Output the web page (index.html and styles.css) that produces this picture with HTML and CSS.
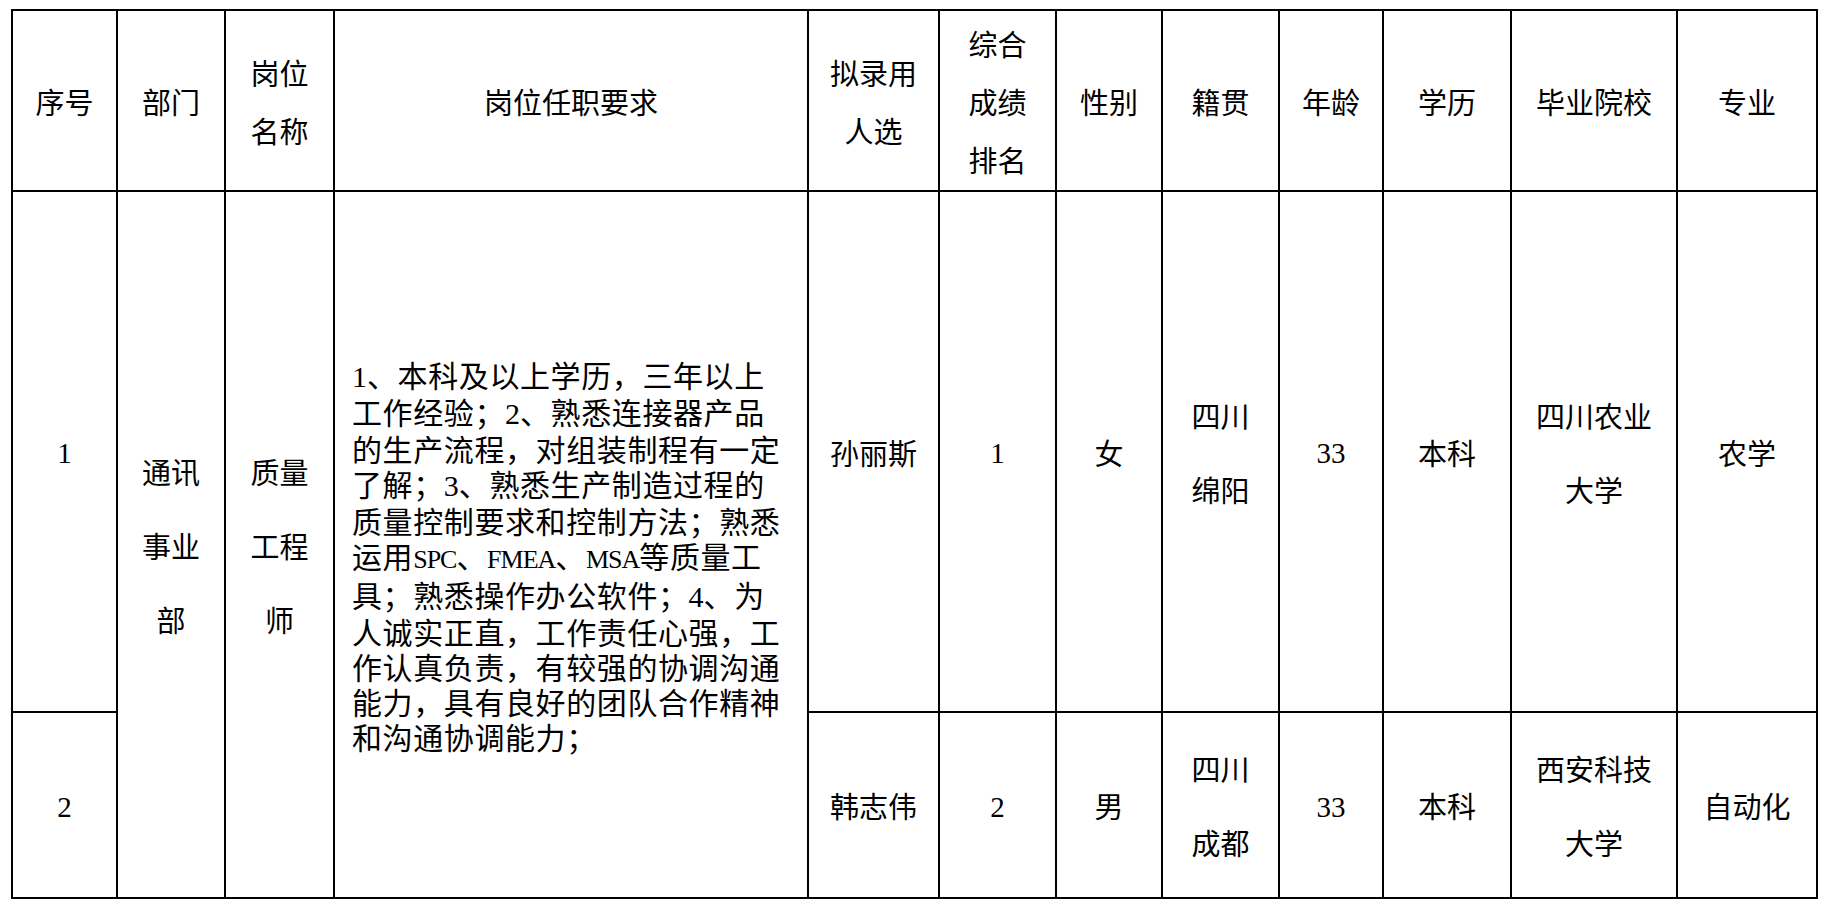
FILE: index.html
```html
<!DOCTYPE html>
<html lang="zh-CN">
<head>
<meta charset="utf-8">
<title>拟录用人选</title>
<link rel="stylesheet" href="styles.css">
</head>
<body>
<table class="grid">
  <colgroup>
    <col class="c1"><col class="c2"><col class="c3"><col class="c4"><col class="c5"><col class="c6">
    <col class="c7"><col class="c8"><col class="c9"><col class="c10"><col class="c11"><col class="c12">
  </colgroup>
  <thead>
    <tr class="head">
      <th>序号</th>
      <th>部门</th>
      <th>岗位<br>名称</th>
      <th>岗位任职要求</th>
      <th>拟录用<br>人选</th>
      <th>综合<br>成绩<br>排名</th>
      <th>性别</th>
      <th>籍贯</th>
      <th>年龄</th>
      <th>学历</th>
      <th>毕业院校</th>
      <th>专业</th>
    </tr>
  </thead>
  <tbody>
    <tr class="r1">
      <td><span class="lat">1</span></td>
      <td rowspan="2">通讯<br>事业<br>部</td>
      <td rowspan="2">质量<br>工程<br>师</td>
      <td rowspan="2" class="req">
        <div class="req-text"><span class="lat">1</span>、本科及以上学历，三年以上<br>工作经验；<span class="lat">2</span>、熟悉连接器产品<br>的生产流程，对组装制程有一定<br>了解；<span class="lat">3</span>、熟悉生产制造过程的<br>质量控制要求和控制方法；熟悉<br>运用<span class="lat abbr">SPC</span>、<span class="lat abbr">FMEA</span>、<span class="lat abbr">MSA</span>等质量工<br>具；熟悉操作办公软件；<span class="lat">4</span>、为<br>人诚实正直，工作责任心强，工<br>作认真负责，有较强的协调沟通<br>能力，具有良好的团队合作精神<br>和沟通协调能力；</div>
      </td>
      <td>孙丽斯</td>
      <td><span class="lat">1</span></td>
      <td>女</td>
      <td>四川<br>绵阳</td>
      <td><span class="lat">33</span></td>
      <td>本科</td>
      <td>四川农业<br>大学</td>
      <td>农学</td>
    </tr>
    <tr class="r2">
      <td><span class="lat">2</span></td>
      <td>韩志伟</td>
      <td><span class="lat">2</span></td>
      <td>男</td>
      <td>四川<br>成都</td>
      <td><span class="lat">33</span></td>
      <td>本科</td>
      <td>西安科技<br>大学</td>
      <td>自动化</td>
    </tr>
  </tbody>
</table>
</body>
</html>
```

FILE: styles.css
```css
html, body {
  background: #ffffff;
}
body {
  margin: 0;
  padding: 9px 0 0 11px;
  font-family: "Noto Sans CJK SC", "Noto Sans", sans-serif;
  color: #000000;
}
.grid {
  border-collapse: collapse;
  table-layout: fixed;
  width: 1807px;
}
.c1 { width: 105px; }
.c2 { width: 108px; }
.c3 { width: 109px; }
.c4 { width: 474px; }
.c5 { width: 131px; }
.c6 { width: 117px; }
.c7 { width: 106px; }
.c8 { width: 117px; }
.c9 { width: 104px; }
.c10 { width: 128px; }
.c11 { width: 166px; }
.c12 { width: 140px; }
.grid th,
.grid td {
  border: 2px solid #000000;
  padding: 0;
  text-align: center;
  vertical-align: middle;
  font-size: 29px;
  font-weight: normal;
  white-space: nowrap;
}
.head { height: 181px; }
.head th { line-height: 58px; }
.r1 { height: 521px; }
.r2 { height: 186px; }
.grid td { line-height: 74px; }
.grid td.req {
  text-align: left;
  padding: 22px 0 0 17px;
}
.req-text {
  line-height: 35px;
  font-size: 30px;
  letter-spacing: 0.6px;
}
.lat {
  font-family: "Liberation Serif", serif;
  letter-spacing: 0;
}
.abbr {
  font-size: 26px;
  letter-spacing: -1px;
}
```
